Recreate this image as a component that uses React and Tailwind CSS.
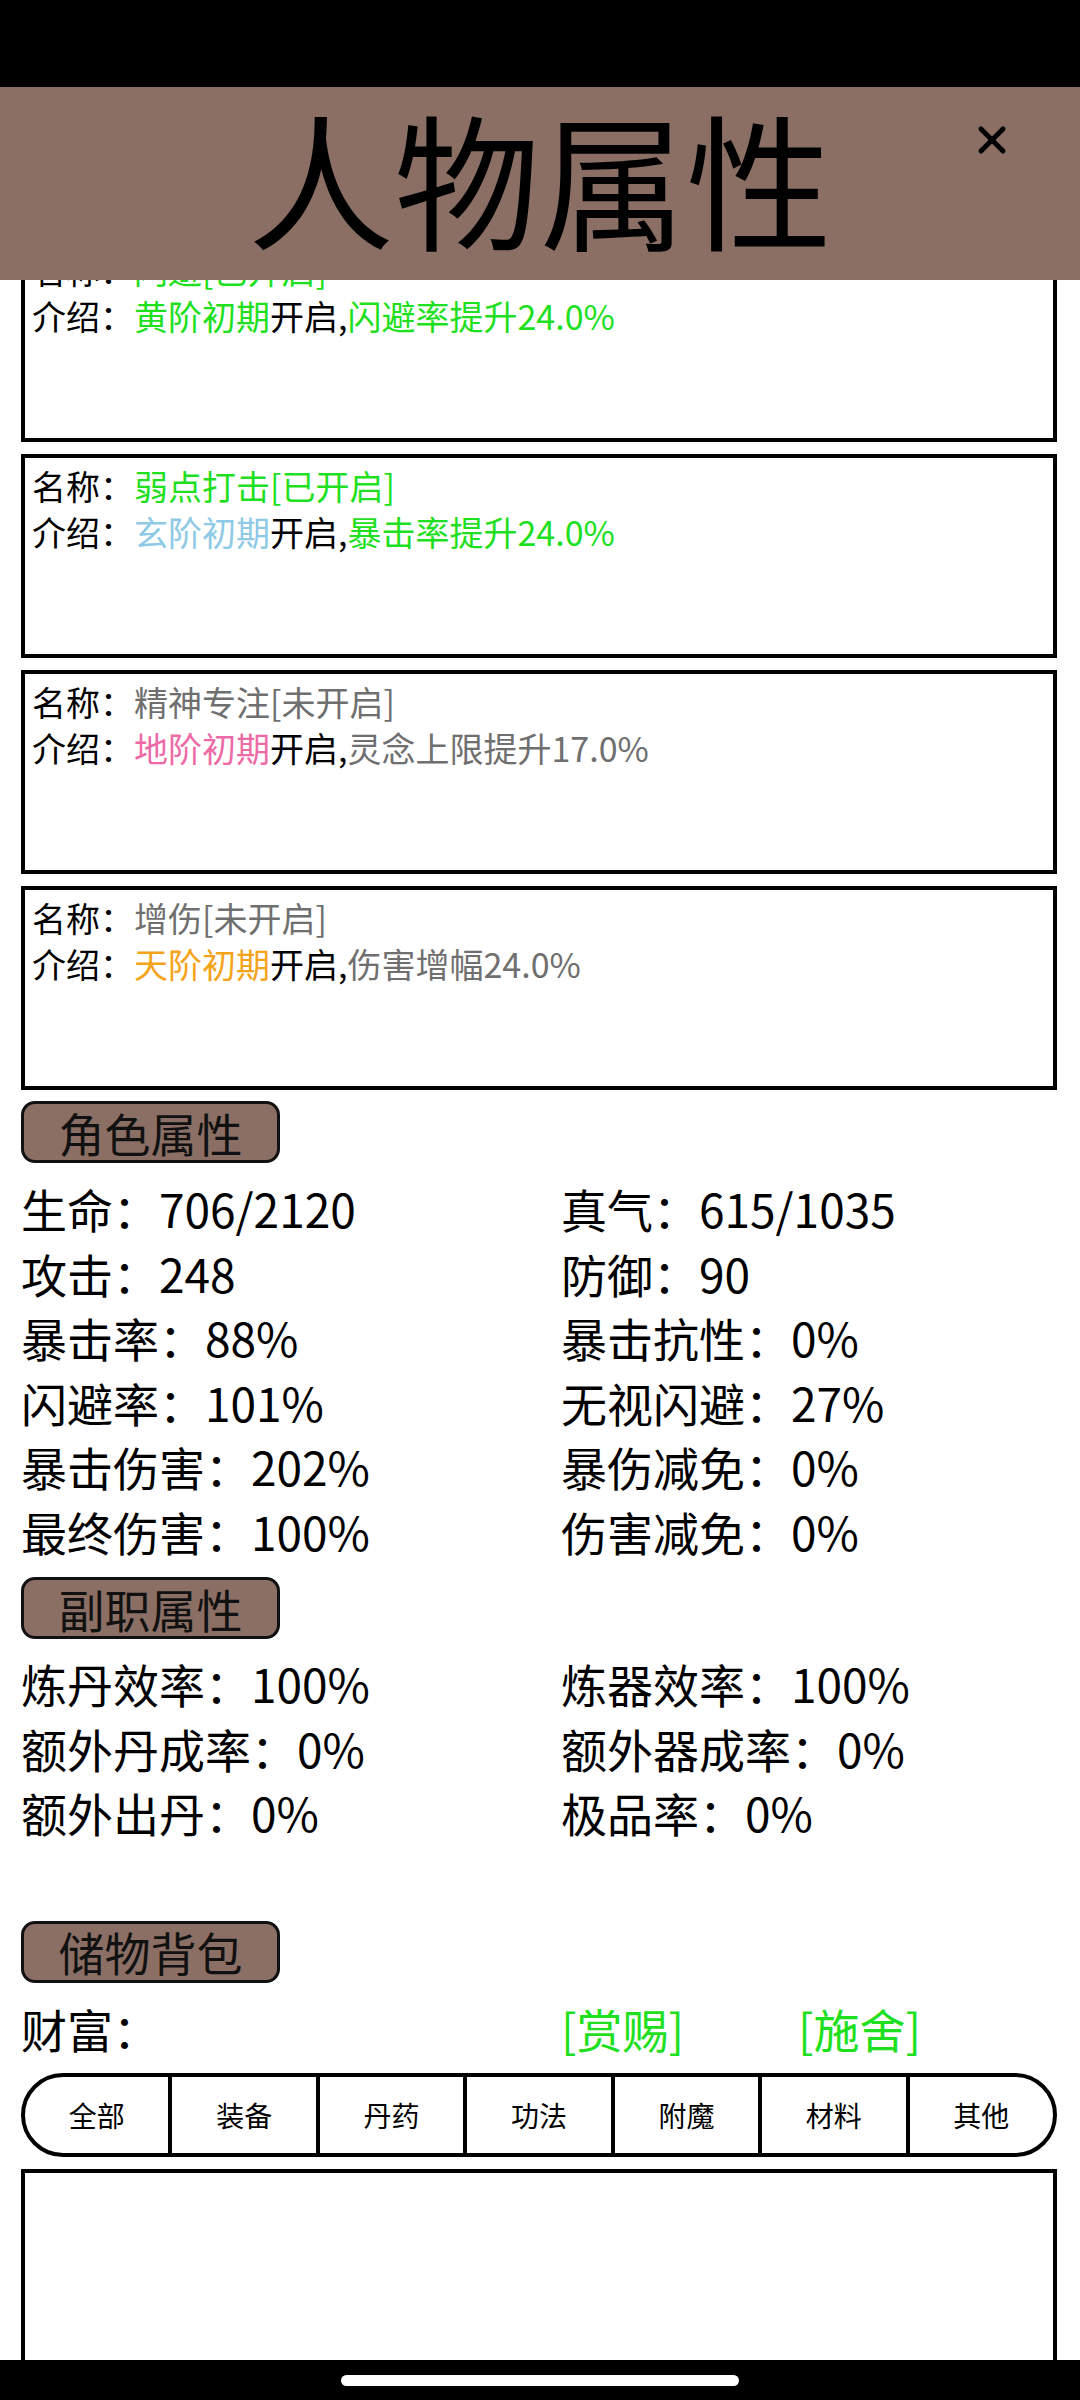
import React from 'react';
import { X } from 'lucide-react';

const GREEN = 'text-[#1ee01e]';
const GRAY = 'text-[#6f6f6f]';

const skills = [
  {
    name: '闪避[已开启]',
    nameColor: GREEN,
    rank: '黄阶初期',
    rankColor: GREEN,
    effect: '闪避率提升24.0%',
    effectColor: GREEN,
  },
  {
    name: '弱点打击[已开启]',
    nameColor: GREEN,
    rank: '玄阶初期',
    rankColor: 'text-[#8ecae6]',
    effect: '暴击率提升24.0%',
    effectColor: GREEN,
  },
  {
    name: '精神专注[未开启]',
    nameColor: GRAY,
    rank: '地阶初期',
    rankColor: 'text-[#ee6aa7]',
    effect: '灵念上限提升17.0%',
    effectColor: GRAY,
  },
  {
    name: '增伤[未开启]',
    nameColor: GRAY,
    rank: '天阶初期',
    rankColor: 'text-[#f5a31a]',
    effect: '伤害增幅24.0%',
    effectColor: GRAY,
  },
];

const roleStats = [
  ['生命：706/2120', '真气：615/1035'],
  ['攻击：248', '防御：90'],
  ['暴击率：88%', '暴击抗性：0%'],
  ['闪避率：101%', '无视闪避：27%'],
  ['暴击伤害：202%', '暴伤减免：0%'],
  ['最终伤害：100%', '伤害减免：0%'],
];

const jobStats = [
  ['炼丹效率：100%', '炼器效率：100%'],
  ['额外丹成率：0%', '额外器成率：0%'],
  ['额外出丹：0%', '极品率：0%'],
];

const tabs = ['全部', '装备', '丹药', '功法', '附魔', '材料', '其他'];

const SkillCard = ({ skill, className = '' }) => (
  <div className={`h-[204px] border-4 border-black bg-white pl-[7px] pt-[5px] text-[34px] leading-[46px] ${className}`}>
    <div className="whitespace-nowrap">
      <span className="text-black">名称：</span>
      <span className={skill.nameColor}>{skill.name}</span>
    </div>
    <div className="whitespace-nowrap">
      <span className="text-black">介绍：</span>
      <span className={skill.rankColor}>{skill.rank}</span>
      <span className="text-black">开启,</span>
      <span className={skill.effectColor}>{skill.effect}</span>
    </div>
  </div>
);

const SectionTitle = ({ children, className = '' }) => (
  <div className={`flex h-[62px] w-[259px] items-center justify-center rounded-[14px] border-[3px] border-[#111] bg-[#8b6f65] text-[46px] text-[#111] ${className}`}>
    {children}
  </div>
);

const StatGrid = ({ rows, className = '' }) => (
  <div className={`grid grid-cols-[540px_1fr] text-[46px] leading-[64.5px] text-black ${className}`}>
    {rows.map(([left, right]) => (
      <React.Fragment key={left}>
        <div className="whitespace-nowrap">{left}</div>
        <div className="whitespace-nowrap">{right}</div>
      </React.Fragment>
    ))}
  </div>
);

export default function App() {
  return (
    <div className="flex h-[2400px] w-[1080px] flex-col overflow-hidden bg-white font-['Noto_Sans_CJK_SC',sans-serif]">
      {/* Status bar */}
      <div className="h-[87px] shrink-0 bg-black" />

      {/* Header */}
      <div className="relative flex h-[193px] shrink-0 items-center justify-center bg-[#8b6f65] pb-[16px]">
        <h1 className="text-[146px] leading-none text-black">人物属性</h1>
        <button className="absolute right-[66px] top-[31px] text-black">
          <X size={44} strokeWidth={2.7} />
        </button>
      </div>

      {/* Scrolling content */}
      <div className="flex-1 overflow-hidden pl-[21px] pr-[23px]">
        <div className="-mt-[42px] flex flex-col gap-[12px]">
          {skills.map((s) => (
            <SkillCard key={s.name} skill={s} />
          ))}
        </div>

        <SectionTitle className="mt-[11px]">角色属性</SectionTitle>
        <StatGrid rows={roleStats} className="mt-[13px]" />

        <SectionTitle className="mt-[14px]">副职属性</SectionTitle>
        <StatGrid rows={jobStats} className="mt-[12px]" />

        <SectionTitle className="mt-[76px]">储物背包</SectionTitle>

        {/* Wealth */}
        <div className="mt-[13px] grid grid-cols-[540px_237px_1fr] text-[46px] leading-[64.5px]">
          <div className="text-black">财富：</div>
          <div className={GREEN}>[赏赐]</div>
          <div className={GREEN}>[施舍]</div>
        </div>

        {/* Tabs */}
        <div className="mt-[13px] flex h-[84px] divide-x-4 divide-black overflow-hidden rounded-full border-4 border-black">
          {tabs.map((t) => (
            <button key={t} className="flex flex-1 items-center justify-center text-[28px] text-black">
              {t}
            </button>
          ))}
        </div>

        {/* Bag contents */}
        <div className="mt-[12px] h-[260px] border-4 border-black" />
      </div>

      {/* Navigation bar */}
      <div className="flex h-[40px] shrink-0 items-center justify-center bg-black">
        <div className="h-[11px] w-[398px] rounded-full bg-white" />
      </div>
    </div>
  );
}
